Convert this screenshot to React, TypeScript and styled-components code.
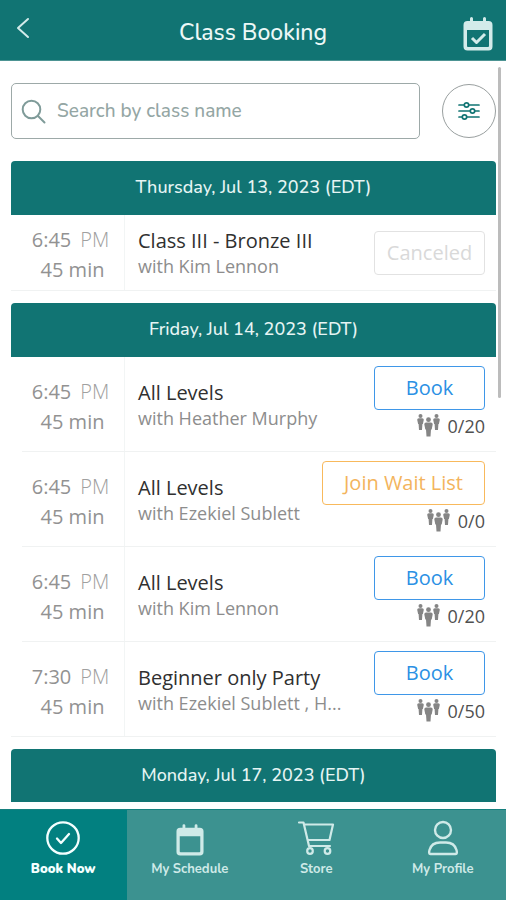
import React from 'react';
import styled, { createGlobalStyle } from 'styled-components';

const teal = '#117473';
const heading = "'Nunito', 'Lato', 'Open Sans', sans-serif";
const body = "'Open Sans', 'Noto Sans', sans-serif";

const GlobalStyle = createGlobalStyle`
  *, *::before, *::after { box-sizing: border-box; }
  body { margin: 0; background: #fff; font-family: ${body}; }
  h1, h2, h3, p, ul { margin: 0; padding: 0; font-weight: 400; }
  ul { list-style: none; }
  button, input { font: inherit; }
  svg { display: block; flex: none; }
`;

const Page = styled.div`
  display: flex;
  flex-direction: column;
  height: 100vh;
  background: #fff;
`;

const Header = styled.header`
  display: grid;
  grid-template-columns: 60px 1fr 60px;
  align-items: center;
  flex: none;
  height: 61px;
  background: ${teal};
  border-bottom: 1px solid #4d9493;
  color: #ecf8f7;
`;

const Title = styled.h1`
  padding-top: 6px;
  text-align: center;
  font: 500 23px/30px ${heading};
`;

const IconButton = styled.button<{ $end?: boolean }>`
  display: flex;
  justify-content: ${p => (p.$end ? 'flex-end' : 'flex-start')};
  padding: ${p => (p.$end ? '8px 13px 0 0' : '0 0 4px 16px')};
  border: 0;
  background: none;
  color: #d3ebea;
  cursor: pointer;
`;

const Content = styled.main`
  position: relative;
  flex: 1;
  min-height: 0;
  overflow: hidden;
  padding: 22px 10px 0 11px;
`;

const ScrollThumb = styled.div`
  position: absolute;
  top: 6px;
  right: 5px;
  width: 3px;
  height: 331px;
  border-radius: 2px;
  background: #bcbcbc;
`;

const SearchRow = styled.form`
  display: flex;
  align-items: center;
  gap: 22px;
  margin-bottom: 22px;
`;

const SearchBox = styled.label`
  display: flex;
  flex: 1;
  align-items: center;
  gap: 11px;
  min-width: 0;
  height: 56px;
  padding-left: 9px;
  border: 1px solid #9da9a8;
  border-radius: 5px;
  color: #7f9b99;
`;

const SearchInput = styled.input`
  flex: 1;
  min-width: 0;
  padding: 0;
  border: 0;
  outline: 0;
  background: none;
  font: 500 19px/28px ${heading};
  color: #4b5f5e;
  &::placeholder { color: #94a6a4; opacity: 1; }
`;

const FilterButton = styled.button`
  display: grid;
  place-items: center;
  width: 54px;
  height: 54px;
  padding: 0;
  border: 1px solid #999f9f;
  border-radius: 50%;
  background: #fff;
  color: ${teal};
  cursor: pointer;
`;

const Day = styled.section`
  margin-bottom: 12px;
`;

const DayTitle = styled.h2`
  padding: 12px 0 14px;
  border-radius: 4px 4px 0 0;
  background: ${teal};
  color: #e6f5f4;
  text-align: center;
  font: 500 18px/28px ${heading};
`;

const ClassRow = styled.li<{ $compact?: boolean }>`
  position: relative;
  display: grid;
  grid-template-columns: 114px minmax(0, 1fr) auto;
  min-height: ${p => (p.$compact ? 76 : 95)}px;

  &::after {
    content: '';
    position: absolute;
    inset: auto 0 0 11px;
    height: 1px;
    background: #f0f2f2;
  }
  &:last-child::after { left: 0; }
`;

const TimeCell = styled.div`
  display: flex;
  flex-direction: column;
  justify-content: center;
  padding: 4px 0 0 10px;
  border-right: 1px solid #f2f5f5;
  text-align: center;
  font-size: 20px;
  line-height: 30px;
  color: #929292;
`;

const Meridiem = styled.span`
  margin-left: 9px;
  font-weight: 300;
  color: #a0a0a0;
`;

const Clock = styled.p`
  white-space: nowrap;
  margin-right: 4px;
`;

const Details = styled.div`
  display: flex;
  flex-direction: column;
  justify-content: center;
  padding-left: 13px;
  white-space: nowrap;
`;

const ClassName = styled.h3`
  font-size: 20px;
  line-height: 26px;
  color: #303030;
`;

const Teacher = styled.p`
  font-size: 18px;
  line-height: 24px;
  color: #8d8d8d;
`;

const Actions = styled.div`
  display: flex;
  flex-direction: column;
  align-items: flex-end;
  justify-content: center;
  gap: 4px;
  padding-right: 11px;
`;

const Spots = styled.p`
  display: flex;
  align-items: center;
  gap: 8px;
  margin-bottom: 6px;
  font-size: 18px;
  line-height: 24px;
  color: #505050;
`;

const tones = {
  book: ['#3f97e8', '#2b90e4'],
  wait: ['#f8b95c', '#f3b45d'],
  off: ['#e2e2e2', '#d9d9d9'],
};

const ActionButton = styled.button<{ $tone: keyof typeof tones }>`
  min-width: 111px;
  height: 44px;
  padding: 0 ${p => (p.$tone === 'wait' ? 21 : 11)}px;
  border: 1px solid ${p => tones[p.$tone][0]};
  border-radius: 4px;
  background: #fff;
  color: ${p => tones[p.$tone][1]};
  font-size: 20px;
  line-height: 28px;
  cursor: pointer;
  &:disabled { cursor: default; }
`;

const Nav = styled.nav`
  display: grid;
  grid-template-columns: repeat(4, 1fr);
  flex: none;
  height: 91px;
  margin-top: 7px;
  background: #3c9290;
  border-top: 1px solid #16807e;
`;

const NavItem = styled.a<{ $active?: boolean }>`
  display: flex;
  flex-direction: column;
  align-items: center;
  gap: 3px;
  padding-top: 10px;
  background: ${p => (p.$active ? '#028080' : 'transparent')};
  color: ${p => (p.$active ? '#f4ffff' : '#cfeae8')};
  font: ${p => (p.$active ? 900 : 700)} 13px/20px ${heading};
  text-decoration: none;
`;

const NavIcon = styled.span`
  display: flex;
  align-items: flex-end;
  height: 36px;
`;

const stroke = { fill: 'none', stroke: 'currentColor', strokeLinecap: 'round', strokeLinejoin: 'round' } as const;

const BackIcon = () => (
  <svg width="14" height="22" viewBox="0 0 14 22" {...stroke} strokeWidth="2"><path d="M12 2 2 11l10 9" /></svg>
);

const CalendarIcon = ({ checked }: { checked?: boolean }) => (
  <svg width={checked ? 30 : 28} height={checked ? 34 : 32} viewBox="0 0 30 34" aria-hidden="true">
    <path fill="currentColor" fillRule="evenodd" d="M7 1.500a1.500 1.500 0 0 1 3 0V4h10V1.500a1.500 1.500 0 0 1 3 0V4h2.500a4 4 0 0 1 4 4v21.500a4 4 0 0 1-4 4h-21a4 4 0 0 1-4-4V8a4 4 0 0 1 4-4H7ZM4 13v16a1 1 0 0 0 1 1h20a1 1 0 0 0 1-1V13Z" />
    {checked && <path {...stroke} strokeWidth="3" strokeLinecap="butt" d="m9 21 4.500 4.500L22 17" />}
  </svg>
);

const SearchIcon = () => (
  <svg width="25" height="25" viewBox="0 0 25 25" {...stroke} strokeWidth="2"><circle cx="10.500" cy="10.500" r="8.800" /><path d="m17 17 6.500 6.500" /></svg>
);

const FilterIcon = () => (
  <svg width="22" height="20" viewBox="0 0 22 20" {...stroke} strokeWidth="1.700">
    <path d="M1 4h5m5 0h10M1 10h11m5 0h4M1 16h3m5 0h12" />
    <circle cx="8.500" cy="4" r="2.200" /><circle cx="14.500" cy="10" r="2.200" /><circle cx="6.500" cy="16" r="2.200" />
  </svg>
);

const person = 'M-3.300 5.800q0-1.500 1.600-1.500h3.400q1.600 0 1.600 1.500L2.400 10H1.900l-.4 6h-3l-.4-6h-.5Z';
const PeopleIcon = () => (
  <svg width="23" height="23" viewBox="0 0 23 23" fill="#858585" aria-hidden="true">
    <g transform="translate(3.500 0)"><circle cy="2" r="2" /><path d={person} /></g>
    <g transform="translate(19.500 0)"><circle cy="2" r="2" /><path d={person} /></g>
    <g transform="translate(11.500 3.500)"><circle cy="2.200" r="2.400" /><path d="M-4.200 6.800q0-1.800 1.800-1.800h4.800q1.800 0 1.800 1.800L3.200 12h-.7L2 19h-4l-.5-7h-.7Z" /></g>
  </svg>
);

const CheckCircleIcon = () => (
  <svg width="36" height="36" viewBox="0 0 36 36" {...stroke} strokeWidth="2.300"><circle cx="18" cy="18" r="15.700" /><path d="m12 18.500 4 4.500 8-9" /></svg>
);

const CartIcon = () => (
  <svg width="38" height="36" viewBox="0 0 38 36" {...stroke} strokeWidth="2.200">
    <path d="M2 2.500h4.500L12 26h21M7.500 4.500H36L32.500 20H11" /><circle cx="13" cy="31" r="2.800" /><circle cx="30.500" cy="31" r="2.800" />
  </svg>
);

const ProfileIcon = () => (
  <svg width="32" height="36" viewBox="0 0 32 36" {...stroke} strokeWidth="2.400">
    <circle cx="16" cy="10" r="8" /><path d="M3.500 34C1.800 34 2 32 2.500 30c1.400-5 5.500-7.500 10.500-7.500h6c5 0 9.100 2.500 10.500 7.500.5 2 .7 4-1 4Z" />
  </svg>
);

type Tone = keyof typeof tones;
type Lesson = { time: string; name: string; teacher: string; action: string; tone: Tone; spots?: string };

const days: { date: string; lessons: Lesson[] }[] = [
  {
    date: 'Thursday, Jul 13, 2023 (EDT)',
    lessons: [{ time: '6:45', name: 'Class III - Bronze III', teacher: 'with Kim Lennon', action: 'Canceled', tone: 'off' }],
  },
  {
    date: 'Friday, Jul 14, 2023 (EDT)',
    lessons: [
      { time: '6:45', name: 'All Levels', teacher: 'with Heather Murphy', action: 'Book', tone: 'book', spots: '0/20' },
      { time: '6:45', name: 'All Levels', teacher: 'with Ezekiel Sublett', action: 'Join Wait List', tone: 'wait', spots: '0/0' },
      { time: '6:45', name: 'All Levels', teacher: 'with Kim Lennon', action: 'Book', tone: 'book', spots: '0/20' },
      { time: '7:30', name: 'Beginner only Party', teacher: 'with Ezekiel Sublett , H...', action: 'Book', tone: 'book', spots: '0/50' },
    ],
  },
  { date: 'Monday, Jul 17, 2023 (EDT)', lessons: [] },
];

export default function App() {
  return (
    <>
      <GlobalStyle />
      <Page>
        <Header>
          <IconButton aria-label="Back"><BackIcon /></IconButton>
          <Title>Class Booking</Title>
          <IconButton $end aria-label="My bookings"><CalendarIcon checked /></IconButton>
        </Header>
        <Content>
          <SearchRow>
            <SearchBox>
              <SearchIcon />
              <SearchInput type="text" placeholder="Search by class name" aria-label="Search by class name" />
            </SearchBox>
            <FilterButton type="button" aria-label="Filters"><FilterIcon /></FilterButton>
          </SearchRow>
          {days.map(day => (
            <Day key={day.date}>
              <DayTitle>{day.date}</DayTitle>
              <ul>
                {day.lessons.map((l, i) => (
                  <ClassRow key={i} $compact={!l.spots}>
                    <TimeCell>
                      <Clock>{l.time}<Meridiem>PM</Meridiem></Clock>
                      <p>45 min</p>
                    </TimeCell>
                    <Details>
                      <ClassName>{l.name}</ClassName>
                      <Teacher>{l.teacher}</Teacher>
                    </Details>
                    <Actions>
                      <ActionButton $tone={l.tone} disabled={l.tone === 'off'}>{l.action}</ActionButton>
                      {l.spots && <Spots><PeopleIcon />{l.spots}</Spots>}
                    </Actions>
                  </ClassRow>
                ))}
              </ul>
            </Day>
          ))}
          <ScrollThumb />
        </Content>
        <Nav aria-label="Main">
          <NavItem href="#book" $active aria-current="page"><NavIcon><CheckCircleIcon /></NavIcon>Book Now</NavItem>
          <NavItem href="#schedule"><NavIcon><CalendarIcon /></NavIcon>My Schedule</NavItem>
          <NavItem href="#store"><NavIcon><CartIcon /></NavIcon>Store</NavItem>
          <NavItem href="#profile"><NavIcon><ProfileIcon /></NavIcon>My Profile</NavItem>
        </Nav>
      </Page>
    </>
  );
}
